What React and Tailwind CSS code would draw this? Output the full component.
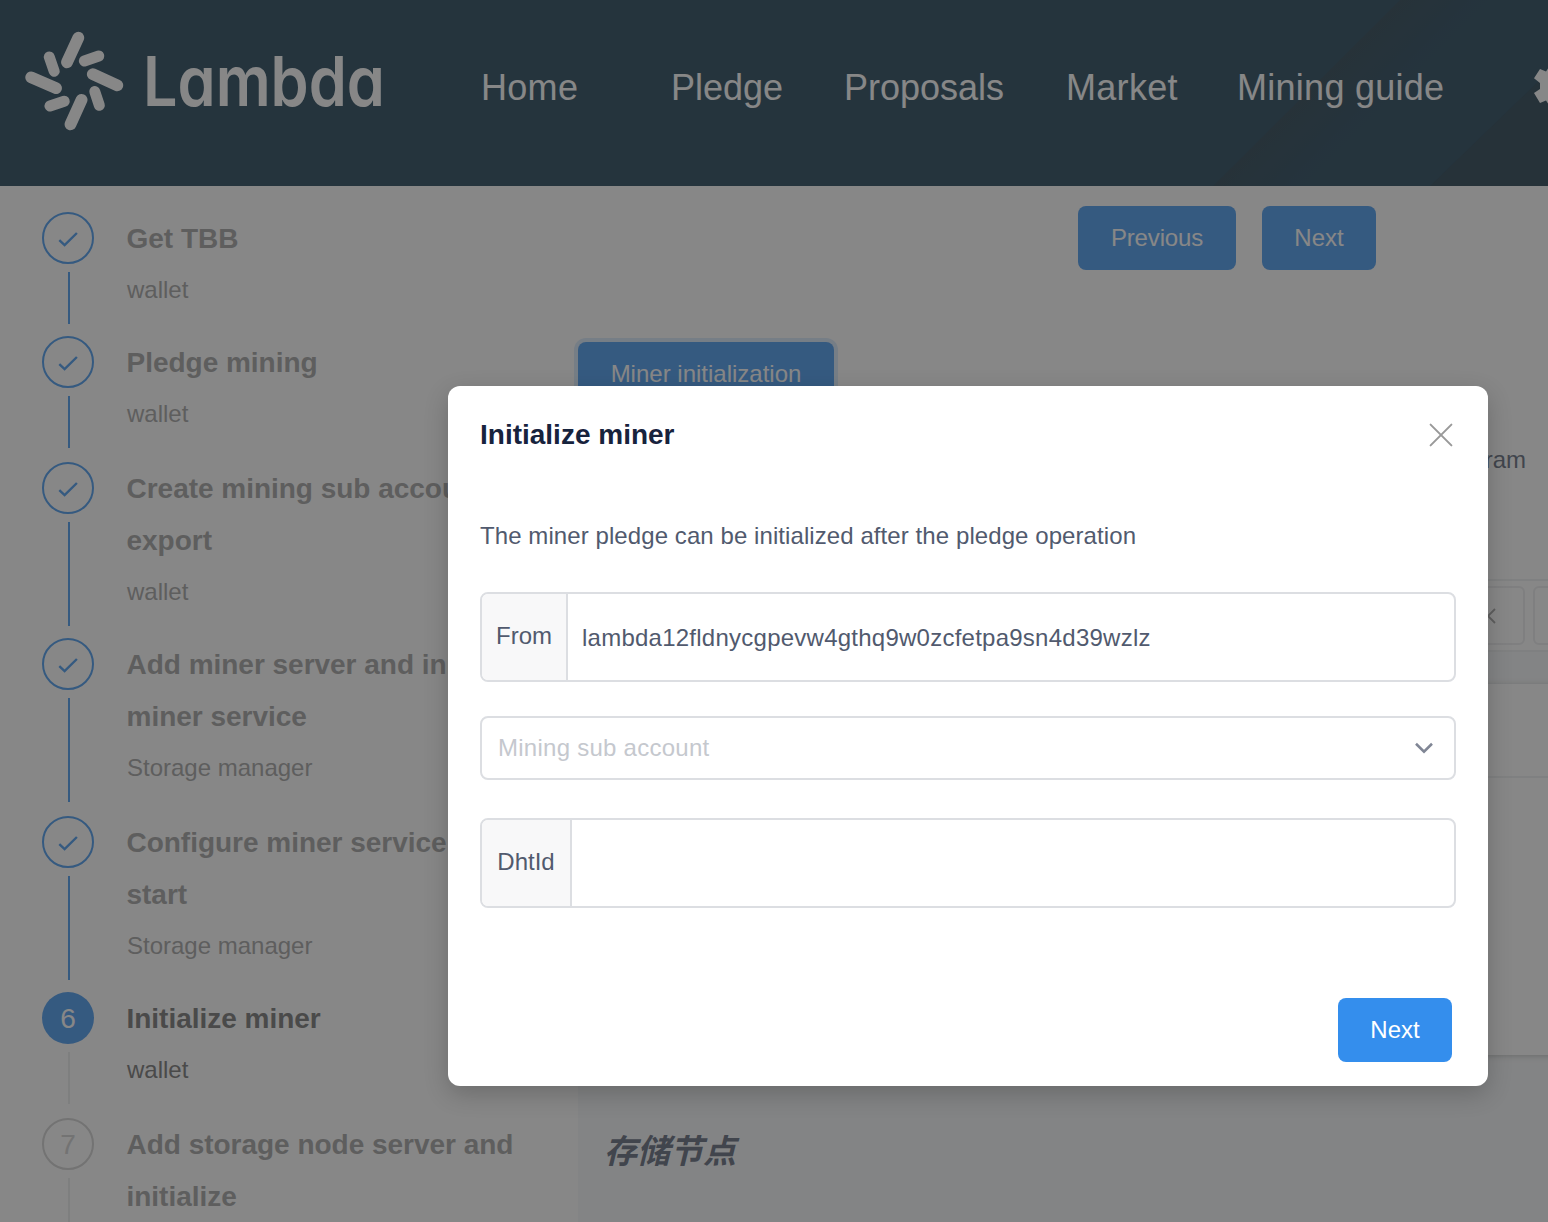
import React from "react";

const steps = [
  { lines: ["Get TBB"], sub: "wallet", state: "done", h: "h-[124px]", bar: "h-[52px]" },
  { lines: ["Pledge mining"], sub: "wallet", state: "done", h: "h-[126px]", bar: "h-[52px]" },
  { lines: ["Create mining sub account and", "export"], sub: "wallet", state: "done", h: "h-[176px]", bar: "h-[104px]" },
  { lines: ["Add miner server and initialize", "miner service"], sub: "Storage manager", state: "done", h: "h-[178px]", bar: "h-[104px]" },
  { lines: ["Configure miner service and", "start"], sub: "Storage manager", state: "done", h: "h-[176px]", bar: "h-[104px]" },
  { lines: ["Initialize miner"], sub: "wallet", state: "active", h: "h-[126px]", bar: "h-[52px]" },
  { lines: ["Add storage node server and", "initialize"], state: "todo", h: "h-[178px]", bar: "h-[104px]" },
];

const circle = {
  done: "border-2 border-[#348eed] text-[#348eed]",
  active: "bg-[#348eed] text-white",
  todo: "border-2 border-[#cccccc] text-[#cccccc]",
};

const title = { done: "text-[#999999]", active: "text-[#666666]", todo: "text-[#999999]" };

function Step({ step, index }) {
  return (
    <li className={`flex ${step.h}`}>
      <div className="flex w-[54px] shrink-0 flex-col">
        <div className={`flex size-[52px] items-center justify-center rounded-full text-[28px] ${circle[step.state]}`}>
          {step.state === "done" ? (
            <svg viewBox="0 0 24 20" className="mt-[3px] h-5 w-6" fill="none" stroke="currentColor" strokeWidth="2.4">
              <path d="M3.3 10.2 L8.6 15.2 L20.9 3" />
            </svg>
          ) : (
            <span className="pt-px">{index + 1}</span>
          )}
        </div>
        <div className={`mt-2 ml-[26px] w-[2px] ${step.bar} ${step.state === "done" ? "bg-[#348eed]" : "bg-[#e8eaec]"}`} />
      </div>
      <div className={`ml-[31px] pt-px whitespace-nowrap leading-[52px] ${title[step.state]}`}>
        {step.lines.map((l) => (
          <div key={l} className="-ml-[0.5px] text-[28px] font-bold tracking-[-0.02px]">{l}</div>
        ))}
        {step.sub && <div className="-mt-px text-2xl leading-[52px]">{step.sub}</div>}
      </div>
    </li>
  );
}

function LogoMark() {
  return (
    <svg viewBox="0 0 100 100" className="size-[100px]" fill="none" stroke="#fff" strokeLinecap="round">
      <g strokeWidth="11.8">
        <path d="M53.3 6.7 L42 31.3" />
        <path d="M92.3 54.3 L67.8 43.2" />
        <path d="M56.6 68.8 L45.5 93.3" />
        <path d="M6.2 46.3 L31 57.2" />
      </g>
      <g strokeWidth="11">
        <path d="M73.8 25 L59.4 30" />
        <path d="M69.8 60.6 L74.3 74.3" />
        <path d="M39.2 70.2 L25 75" />
        <path d="M24.3 26 L29.2 40.2" />
      </g>
    </svg>
  );
}

function Header() {
  return (
    <header className="relative flex h-[186px] shrink-0 overflow-hidden bg-[#0a3048] text-white">
      <svg className="absolute top-0 right-0 h-[186px] w-[400px]" viewBox="0 0 400 186">
        <defs>
          <linearGradient id="band" gradientUnits="userSpaceOnUse" x1="158" y1="93" x2="204" y2="139">
            <stop offset="0" stopColor="#0f2c3d" />
            <stop offset="1" stopColor="#0a3048" />
          </linearGradient>
        </defs>
        <path d="M65 186 L252 0 L345 0 L158 186Z" fill="url(#band)" />
        <path d="M282 186 L400 72 L400 186Z" fill="#0d2b3c" />
      </svg>
      <div className="relative flex items-start pt-[31px] pl-[25px]">
        <LogoMark />
        <div className="mt-[15px] ml-[18px] w-[240px] origin-left scale-x-[0.885] font-['Inter'] text-[69px] leading-[71px] font-semibold whitespace-nowrap [font-feature-settings:'cv11','ss03']">Lambda</div>
      </div>
      <nav className="relative flex pt-[64px] text-[36px] leading-[48px] whitespace-nowrap">
        <span className="ml-[98px] w-[190px] tracking-[0.3px]">Home</span>
        <span className="w-[173px]">Pledge</span>
        <span className="w-[222px]">Proposals</span>
        <span className="w-[171px] tracking-[0.3px]">Market</span>
        <span className="w-[293px] tracking-[0.27px]">Mining guide</span>
      </nav>
      <svg className="relative mt-[66px] size-[40px] shrink-0" viewBox="0 0 40 40" fill="#fff">
        <path d="M4 12.3 L10 3 L16 5.4 L19 1 H29 L32 5.4 L38 3 L44 12.3 L38.5 17 V24 L44 28 L38 37 L32 34.6 L29 39 H19 L16 34.6 L10 37 L4 27 L10 23 V17Z" />
      </svg>
    </header>
  );
}

const button = "flex h-[64px] items-center justify-center rounded-lg bg-[#348eed] text-2xl text-white";

function Content() {
  return (
    <main className="flex w-[1100px] shrink-0 flex-col">
      <div className="mt-5 ml-[500px] flex gap-[26px]">
        <button className={`${button} w-[158px] tracking-[-0.15px]`}>Previous</button>
        <button className={`${button} w-[114px]`}>Next</button>
      </div>
      <button className={`${button} mt-[72px] w-[256px] shadow-[0_0_0_4px_rgba(45,140,240,0.2)]`}>Miner initialization</button>
      <p className="mt-[34px] w-[948px] text-right text-2xl leading-[40px] text-[#515a6e]">storage program</p>
      <div className="mt-[99px] flex h-[73px] items-start gap-2 border-y-2 border-[#eceef0] pt-[5px] pl-[840px]">
        <div className="flex h-[59px] w-[107px] items-center justify-end rounded-md border-2 border-[#ebecee] pr-[27px]">
          <svg viewBox="0 0 16 16" className="size-4" fill="none" stroke="#999" strokeWidth="1.8"><path d="M15 1 L8 8 L15 15 M8 8 L1 1 M8 8 L1 15" /></svg>
        </div>
        <div className="h-[59px] w-[107px] rounded-md border-2 border-[#ebecee]" />
      </div>
      <div className="flex grow flex-col bg-[#f5f7f9] pt-8">
        <div className="h-[371px] bg-white shadow-[0_1px_6px_rgba(0,0,0,0.25)]">
          <div className="h-[94px] border-b-2 border-[#eceef0]" />
        </div>
        <h2 className="mt-[73px] ml-[26px] font-['Liberation_Sans','Noto_Sans_CJK_SC',sans-serif] text-[33px] leading-[48px] font-bold text-[#515a6e] italic">存储节点</h2>
      </div>
    </main>
  );
}

function Field({ label, labelWidth, value }) {
  return (
    <div className="flex h-[90px] overflow-hidden rounded-lg border-2 border-[#dcdee2]">
      <div className={`flex shrink-0 items-center justify-center border-r-2 border-[#dcdee2] bg-[#f8f8f9] pb-[2px] ${labelWidth}`}>{label}</div>
      <div className="flex grow items-center pt-[2px] pl-[14px] tracking-[0.245px]">{value}</div>
    </div>
  );
}

function Modal() {
  return (
    <div className="flex h-[700px] w-[1040px] flex-col rounded-xl bg-white px-8 text-2xl text-[#515a6e] shadow-[0_8px_24px_rgba(0,0,0,0.2)]">
      <div className="flex items-center justify-between pt-[28px]">
        <h1 className="pt-px text-[28px] leading-10 font-bold text-[#17233d]">Initialize miner</h1>
        <svg viewBox="0 0 24 24" className="mt-px mr-[3px] size-6" fill="none" stroke="#999" strokeWidth="2" strokeLinecap="round">
          <path d="M1.6 1.6 L22.4 22.4 M22.4 1.6 L1.6 22.4" />
        </svg>
      </div>
      <p className="mt-[61px] leading-10 tracking-[0.08px]">The miner pledge can be initialized after the pledge operation</p>
      <div className="mt-9">
        <Field label="From" labelWidth="w-[86px]" value="lambda12fldnycgpevw4gthq9w0zcfetpa9sn4d39wzlz" />
      </div>
      <div className="mt-[34px] flex h-[64px] items-center justify-between rounded-lg border-2 border-[#dcdee2] pr-5 pl-4">
        <span className="tracking-[0.26px] text-[#c5c8ce]">Mining sub account</span>
        <svg viewBox="0 0 20 12" className="h-3 w-5" fill="none" stroke="#808695" strokeWidth="2.6"><path d="M2 1.8 L10 9.6 L18 1.8" /></svg>
      </div>
      <div className="mt-[38px]">
        <Field label="DhtId" labelWidth="w-[90px]" value="" />
      </div>
      <div className="mt-[90px] mr-1 flex justify-end">
        <button className={`${button} w-[114px]`}>Next</button>
      </div>
    </div>
  );
}

export default function App() {
  return (
    <div className="relative h-[1222px] w-[1548px] overflow-hidden bg-white font-['Liberation_Sans','Noto_Sans_CJK_SC',sans-serif]">
      <div className="flex h-full flex-col">
        <Header />
        <div className="flex min-h-0 grow">
          <ol className="w-[578px] shrink-0 pt-[26px] pl-[42px]">
            {steps.map((s, i) => (
              <Step key={s.lines[0]} step={s} index={i} />
            ))}
          </ol>
          <Content />
        </div>
      </div>
      <div className="absolute inset-0 bg-[rgba(55,55,55,0.6)] pt-[386px] pl-[448px]">
        <Modal />
      </div>
    </div>
  );
}
